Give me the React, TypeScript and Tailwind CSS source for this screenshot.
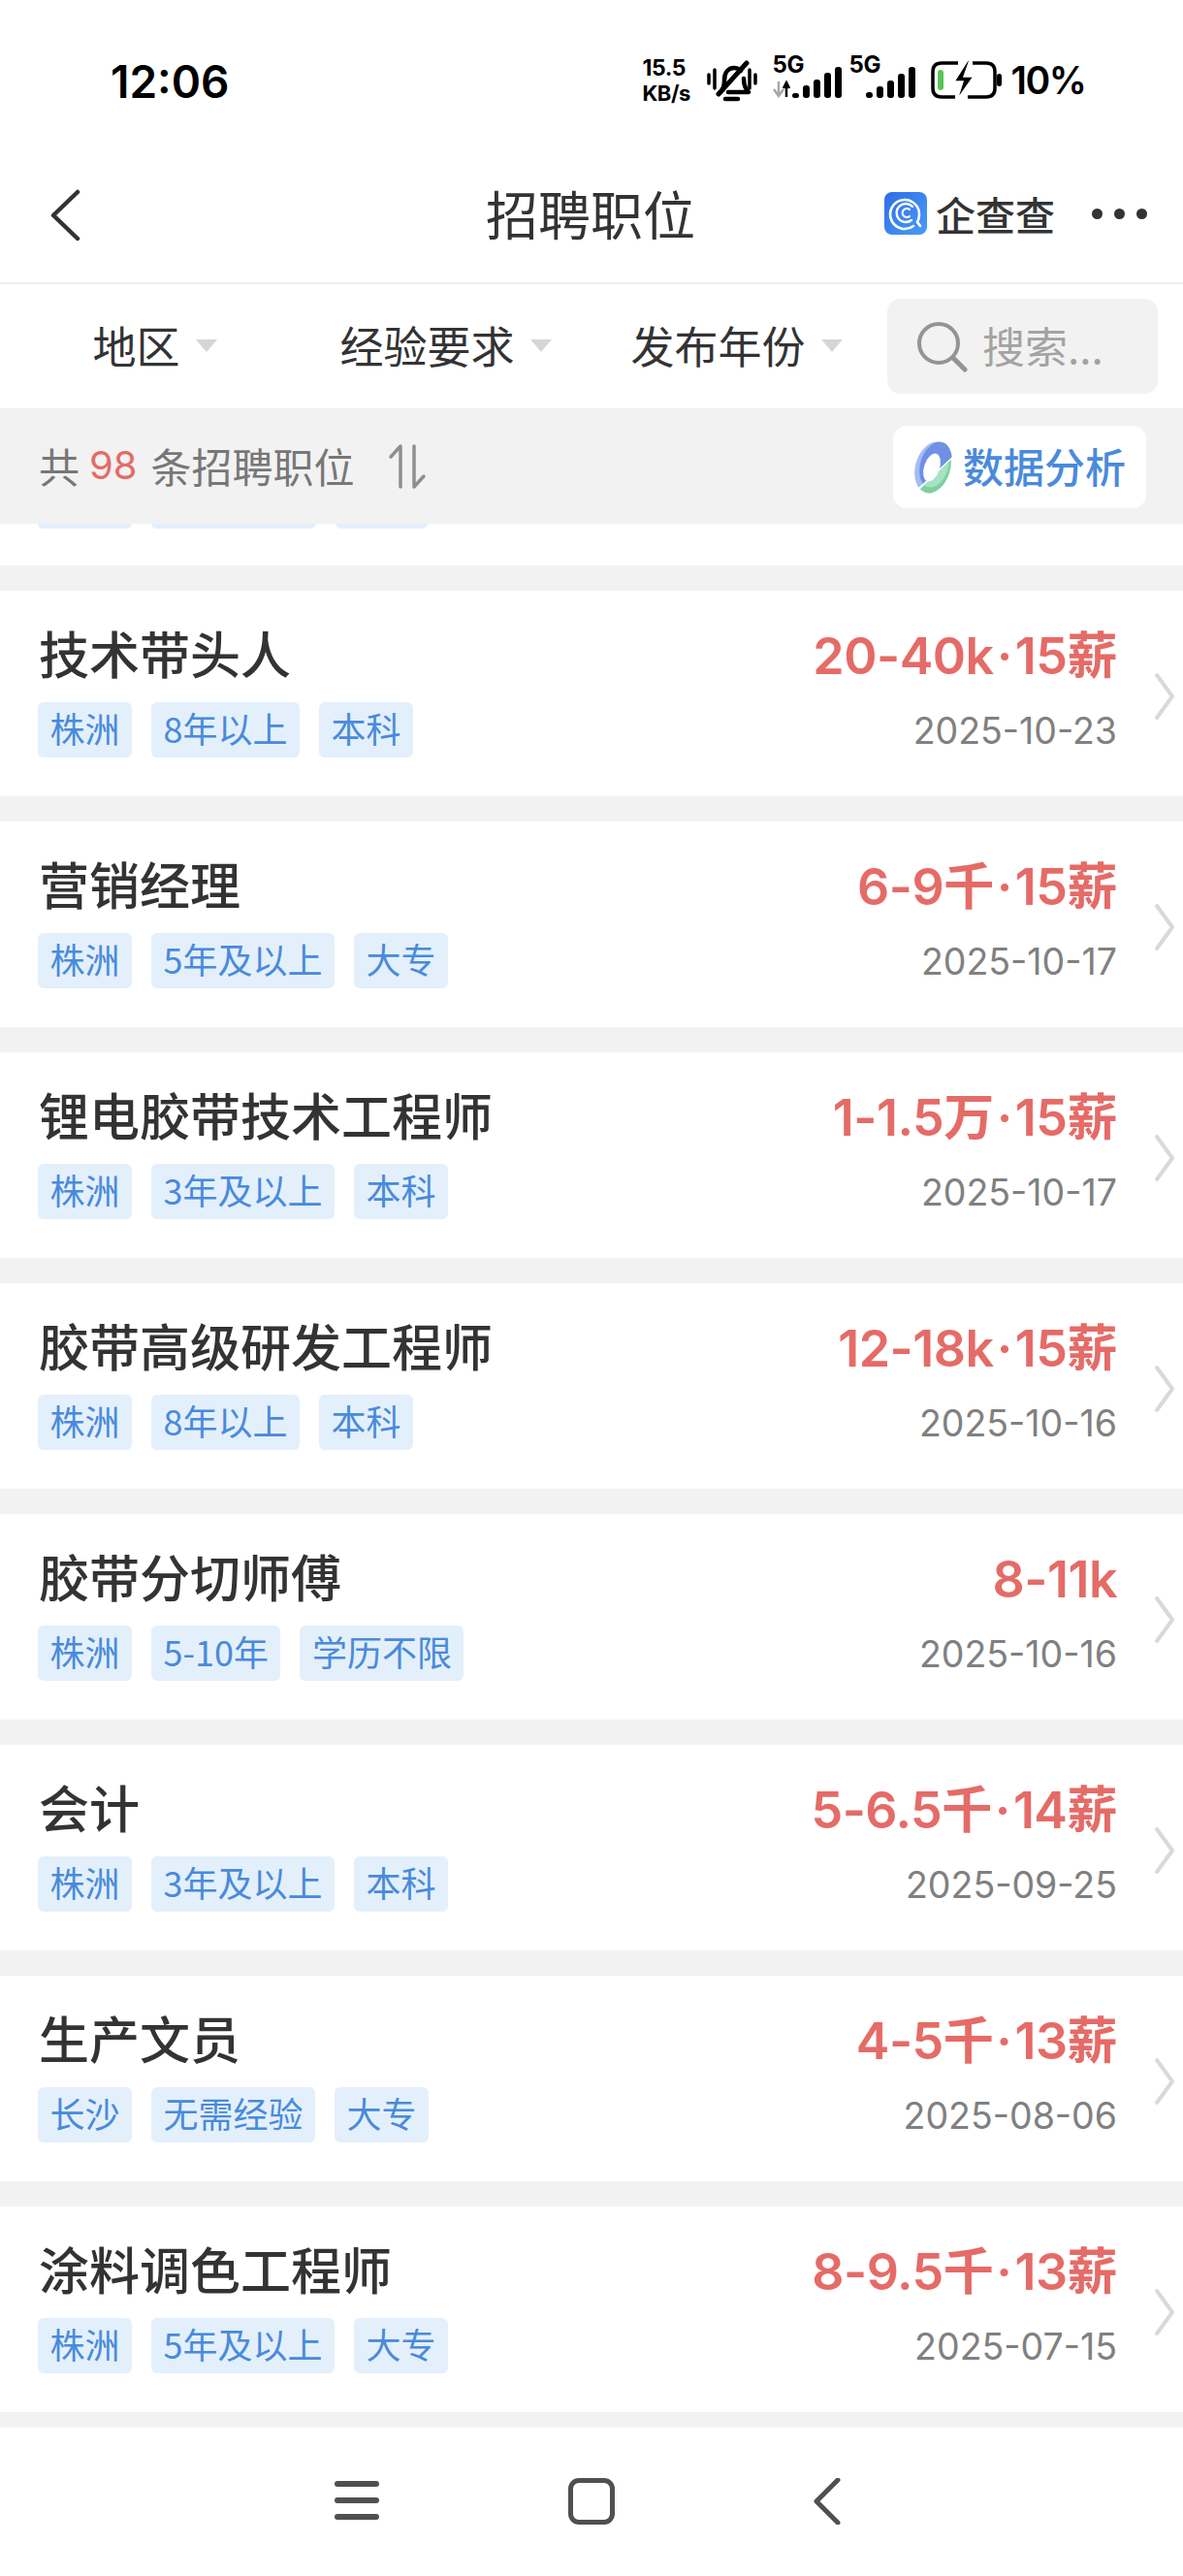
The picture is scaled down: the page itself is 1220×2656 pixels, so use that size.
const cjk = "font-['Noto_Sans_CJK_SC','Noto_Sans',sans-serif]";
const latinCjk = "font-['Inter','Noto_Sans_CJK_SC',sans-serif]";

type Job = {
  title: string;
  pay: string;
  bonus?: string;
  date: string;
  tags: string[];
};

const jobs: Job[] = [
  { title: "技术带头人", pay: "20-40k", bonus: "15薪", date: "2025-10-23", tags: ["株洲", "8年以上", "本科"] },
  { title: "营销经理", pay: "6-9千", bonus: "15薪", date: "2025-10-17", tags: ["株洲", "5年及以上", "大专"] },
  { title: "锂电胶带技术工程师", pay: "1-1.5万", bonus: "15薪", date: "2025-10-17", tags: ["株洲", "3年及以上", "本科"] },
  { title: "胶带高级研发工程师", pay: "12-18k", bonus: "15薪", date: "2025-10-16", tags: ["株洲", "8年以上", "本科"] },
  { title: "胶带分切师傅", pay: "8-11k", date: "2025-10-16", tags: ["株洲", "5-10年", "学历不限"] },
  { title: "会计", pay: "5-6.5千", bonus: "14薪", date: "2025-09-25", tags: ["株洲", "3年及以上", "本科"] },
  { title: "生产文员", pay: "4-5千", bonus: "13薪", date: "2025-08-06", tags: ["长沙", "无需经验", "大专"] },
  { title: "涂料调色工程师", pay: "8-9.5千", bonus: "13薪", date: "2025-07-15", tags: ["株洲", "5年及以上", "大专"] },
];

function SignalBars({ heights }: { heights: number[] }) {
  return (
    <div className="flex items-end gap-[4px]">
      {heights.map((h) => (
        <span key={h} className="w-[7px] rounded-[3px] bg-black" style={{ height: h }} />
      ))}
    </div>
  );
}

function StatusBar() {
  return (
    <div className="flex h-[165px] items-start pt-[59px]">
      <span className="ml-[114px] font-['Inter',sans-serif] text-[46px] leading-[50px] font-semibold text-black">12:06</span>
      <div className="ml-[426px] flex items-start font-['Inter',sans-serif] text-black">
        <div className="flex w-[54px] flex-col items-start font-bold">
          <span className="text-[23px] leading-[22px] tracking-[-0.5px]">15.5</span>
          <span className="mt-[4px] text-[22px] leading-[22px] tracking-[-0.5px]">KB/s</span>
        </div>
        <svg className="mt-[3px] ml-[12px]" width="52" height="44" viewBox="0 0 52 44" fill="none" stroke="#000" strokeLinecap="round">
          <path d="M2 15v9M50 15v9" strokeWidth="3.5" />
          <path d="M8 10v19M44 10v19" strokeWidth="3.5" />
          <path d="M14 33c3-3 4-6 4-12 0-8 4-13 10-13 3 0 5 1 7 3M38 19c0 7 2 11 5 14H22" strokeWidth="4.500" strokeLinejoin="round" />
          <path d="M19 40h13" strokeWidth="4.500" />
          <path d="M12 35 41 3" strokeWidth="5" />
        </svg>
        <div className="relative ml-[16px] h-[42px] w-[71px]">
          <span className="absolute top-[-3px] left-0 text-[24px] leading-[22px] font-bold tracking-[-0.5px]">5G</span>
          <svg className="absolute bottom-0 left-0" width="20" height="18" viewBox="0 0 20 18" fill="none" strokeWidth="2.5">
            <path d="M6 1v14M1 9l5 7 5-7" stroke="#a8a8a8" />
            <path d="M14 17V3M11 8l3-6 3 6" stroke="#000" />
          </svg>
          <div className="absolute right-0 bottom-0">
            <SignalBars heights={[5, 13, 19, 26, 32]} />
          </div>
        </div>
        <div className="relative ml-[8px] h-[42px] w-[68px]">
          <span className="absolute top-[-3px] left-0 text-[24px] leading-[22px] font-bold tracking-[-0.5px]">5G</span>
          <div className="absolute right-0 bottom-0">
            <SignalBars heights={[6, 12, 18, 25, 32]} />
          </div>
        </div>
        <svg className="mt-[3px] ml-[15px]" width="75" height="41" viewBox="0 0 75 41" fill="none">
          <path d="M29 3H12C6 3 3 6 3 12v17c0 6 3 9 9 9h14M44 3h14c6 0 9 3 9 9v17c0 6-3 9-9 9H39" stroke="#000" strokeWidth="3.500" />
          <rect x="69" y="14" width="5" height="13" rx="2.5" fill="#000" />
          <rect x="8" y="10" width="6" height="21" rx="3" fill="#5cc25c" />
          <path d="M39 0 25 22h9l-6 19 17-24h-10l6-17z" fill="#000" stroke="#fff" strokeWidth="1.5" />
        </svg>
        <span className="mt-[2px] ml-[9px] text-[39px] leading-[44px] font-semibold tracking-[-1.5px]">10%</span>
      </div>
    </div>
  );
}

function NavBar() {
  return (
    <div className={`flex h-[128px] items-center border-b-2 border-[#f0f0f0] pb-[16px] ${cjk}`}>
      <svg className="mt-[4px] ml-[50px]" width="34" height="54" viewBox="0 0 34 54" fill="none">
        <path d="M30 3 5 27l25 24" stroke="#333" strokeWidth="4.5" strokeLinecap="round" strokeLinejoin="round" />
      </svg>
      <h1 className="ml-[417px] text-[54px] leading-[64px] text-[#333]">招聘职位</h1>
      <svg className="ml-[195px]" width="44" height="44" viewBox="0 0 44 44">
        <defs>
          <linearGradient id="qcc" x1="0" y1="0" x2="1" y2="1">
            <stop offset="0" stopColor="#2e6de6" />
            <stop offset="1" stopColor="#4a9cf5" />
          </linearGradient>
        </defs>
        <rect width="44" height="44" rx="8" fill="url(#qcc)" />
        <path d="M30 35a15 15 0 1 1 6-11c0 3-1 5-2 7l3 4" fill="none" stroke="#fff" strokeWidth="2.6" strokeLinecap="round" />
        <path d="M28 29a9.500 9.500 0 1 1 1-14" fill="none" stroke="#fff" strokeWidth="2.4" strokeLinecap="round" />
        <path d="M26 25a4.500 4.500 0 1 1 0-7" fill="none" stroke="#fff" strokeWidth="2.2" strokeLinecap="round" />
      </svg>
      <span className="ml-[9px] text-[41px] leading-[50px] font-medium text-[#333]">企查查</span>
      <div className="ml-[38px] flex gap-[12px]">
        <span className="size-[11px] rounded-full bg-[#333]" />
        <span className="size-[11px] rounded-full bg-[#333]" />
        <span className="size-[11px] rounded-full bg-[#333]" />
      </div>
    </div>
  );
}

function Caret() {
  return (
    <svg width="24" height="14" viewBox="0 0 24 14">
      <path d="M1 1h22L12 14z" fill="#d6d6d6" />
    </svg>
  );
}

function FilterBar() {
  const items = ["地区", "经验要求", "发布年份"];
  return (
    <div className={`flex h-[128px] items-center pl-[10px] ${cjk}`}>
      {items.map((label) => (
        <div key={label} className="flex w-[300px] items-center justify-center gap-[15px] pb-[2px]">
          <span className="text-[45px] leading-[54px] text-[#333]">{label}</span>
          <Caret />
        </div>
      ))}
      <div className="ml-[5px] flex h-[98px] w-[279px] items-center rounded-[14px] bg-[#f2f2f2] pl-[29px]">
        <svg width="54" height="54" viewBox="0 0 54 54" fill="none" stroke="#949494">
          <circle cx="24" cy="24" r="20" strokeWidth="4" />
          <path d="m39 39 12 12" strokeWidth="5" strokeLinecap="round" />
        </svg>
        <span className="ml-[15px] pb-[2px] text-[44px] leading-[54px] text-[#a3a3a3]">搜索...</span>
      </div>
    </div>
  );
}

function StatsBar() {
  return (
    <div className={`flex h-[119px] items-center bg-[#f2f2f2] pr-[38px] pl-[40px] ${cjk}`}>
      <span className="pb-[2px] text-[42px] leading-[50px] text-[#777]">共</span>
      <span className="ml-[10px] pb-[2px] font-['Inter',sans-serif] text-[40px] leading-[50px] text-[#e56b67]">98</span>
      <span className="ml-[14px] pb-[2px] text-[42px] leading-[50px] text-[#777]">条招聘职位</span>
      <svg className="ml-[34px]" width="40" height="46" viewBox="0 0 40 46" fill="none" stroke="#8f8f8f" strokeWidth="3.5" strokeLinecap="round" strokeLinejoin="round">
        <path d="M13 44V2L3 13" />
        <path d="M27 2v42l10-11" />
      </svg>
      <div className="mt-[2px] ml-auto flex h-[85px] w-[261px] items-center rounded-[14px] bg-white pl-[19px]">
        <svg width="44" height="54" viewBox="0 0 44 54">
          <defs>
            <clipPath id="dataTop">
              <path d="M0 0h44v14L5 50H0z" />
            </clipPath>
            <clipPath id="dataBottom">
              <path d="M44 16v38H6v-2z" />
            </clipPath>
          </defs>
          <g clipPath="url(#dataTop)">
            <ellipse cx="22" cy="27" rx="18" ry="27" transform="rotate(16 22 27)" fill="#a4bdf3" />
            <ellipse cx="25" cy="25" rx="16" ry="25" transform="rotate(16 25 25)" fill="#6f90e6" />
          </g>
          <g clipPath="url(#dataBottom)">
            <ellipse cx="22" cy="27" rx="18" ry="27" transform="rotate(16 22 27)" fill="#7ed0a0" />
            <ellipse cx="23" cy="25" rx="15" ry="23" transform="rotate(16 23 25)" fill="#a6e3c2" />
          </g>
          <ellipse cx="21" cy="27" rx="8" ry="15" transform="rotate(18 21 27)" fill="#fff" />
        </svg>
        <span className="ml-[9px] pb-[4px] text-[42px] leading-[50px] font-medium text-[#4a8adb]">数据分析</span>
      </div>
    </div>
  );
}

function Tag({ text }: { text: string }) {
  return (
    <span className={`flex h-[57px] items-center rounded-[6px] bg-[#e3f0fb] px-[12.5px] pb-[6px] text-[36px] leading-[44px] text-[#4a8adb] ${cjk}`}>{text}</span>
  );
}

function JobCard({ job }: { job: Job }) {
  return (
    <div className={`relative flex h-[212px] shrink-0 items-start justify-between bg-white pt-[33px] pr-[68px] pl-[39px] ${cjk}`}>
      <div>
        <div className="pl-[1px] text-[52px] leading-[62px] font-medium text-[#333]">{job.title}</div>
        <div className="mt-[20px] flex gap-[20px]">
          {job.tags.map((tag) => (
            <Tag key={tag} text={tag} />
          ))}
        </div>
      </div>
      <div className="flex flex-col items-end">
        <div className={`mt-[4px] text-[52px] leading-[62px] font-semibold tracking-[-0.5px] text-[#e56b67] ${latinCjk}`}>
          {job.pay}
          {job.bonus && (
            <>
              <span className="mx-[3px]">·</span>
              {job.bonus}
            </>
          )}
        </div>
        <div className="mt-[23px] font-['Inter',sans-serif] text-[37.5px] leading-[46px] text-[#808080]">{job.date}</div>
      </div>
      <svg className="absolute top-[84px] right-[8px]" width="22" height="50" viewBox="0 0 22 50" fill="none">
        <path d="M3 3 19 25 3 47" stroke="#d9d9d9" strokeWidth="4" strokeLinecap="round" strokeLinejoin="round" />
      </svg>
    </div>
  );
}

function BottomNav() {
  return (
    <div className="flex h-[153px] shrink-0 items-start bg-white pt-[52px]">
      <div className="mt-[3px] ml-[345px] flex w-[46px] flex-col gap-[11px]">
        <span className="h-[6px] rounded-full bg-[#505050]" />
        <span className="h-[6px] rounded-full bg-[#505050]" />
        <span className="h-[6px] rounded-full bg-[#505050]" />
      </div>
      <div className="ml-[195px] size-[48px] rounded-[11px] border-[5px] border-[#505050]" />
      <svg className="ml-[202px]" width="32" height="48" viewBox="0 0 32 48" fill="none">
        <path d="M28 2 6 24l22 22" stroke="#505050" strokeWidth="5" strokeLinecap="round" strokeLinejoin="round" />
      </svg>
    </div>
  );
}

export default function App() {
  return (
    <div className="flex h-[2656px] w-[1220px] flex-col overflow-hidden bg-white">
      <StatusBar />
      <NavBar />
      <FilterBar />
      <StatsBar />
      <div className="flex min-h-0 flex-1 flex-col gap-[26px] overflow-hidden bg-[#f2f2f2]">
        <div className="h-[43px] shrink-0 bg-white pl-[39px]">
          <div className="flex gap-[20px]">
            <span className="h-[5px] w-[97px] rounded-b-[5px] bg-[#e3f0fb]" />
            <span className="h-[5px] w-[170px] rounded-b-[5px] bg-[#e3f0fb]" />
            <span className="h-[5px] w-[95px] rounded-b-[5px] bg-[#e3f0fb]" />
          </div>
        </div>
        {jobs.map((job) => (
          <JobCard key={job.title} job={job} />
        ))}
      </div>
      <BottomNav />
    </div>
  );
}
